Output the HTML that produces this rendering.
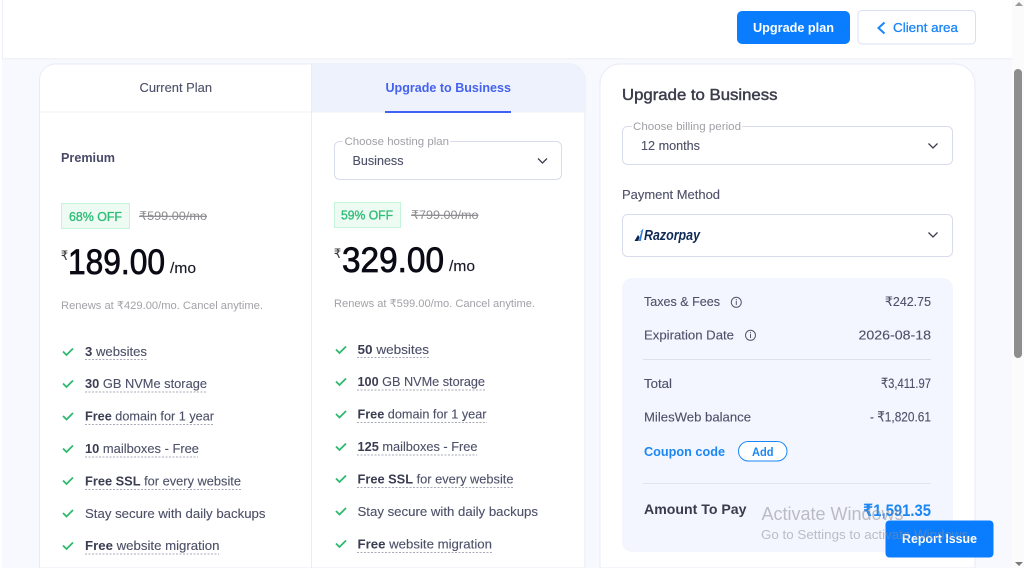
<!DOCTYPE html>
<html><head><meta charset="utf-8"><title>Upgrade to Business</title>
<style>
html,body{margin:0;padding:0;width:1024px;height:568px;overflow:hidden;background:#fff}
svg{display:block;position:absolute;left:0;top:0}
text{font-family:"Liberation Sans","DejaVu Sans",sans-serif;font-size:13px;fill:#4d5068;white-space:pre;stroke:#4d5068;stroke-width:.12}
.b{font-weight:700;stroke:none}
.d{fill:#3b3d52;font-weight:700;stroke:none}
.l{fill:#a0a0a6;font-size:11px;stroke:none}
.g{fill:#2fbd78;font-size:13px}
.s{fill:#8c8c90;font-size:12px;text-decoration:line-through;stroke:none}
.r{fill:#a2a2a8;font-size:11px;stroke:none}
.p{fill:#0a0a14;font-size:35px;stroke:#0a0a14;stroke-width:.75}
.m{fill:#1c1c2a;font-size:15px;stroke:#1c1c2a;stroke-width:.15}
.u{stroke:#a9abb8;stroke-width:1;stroke-dasharray:2 1.5;fill:none}
.c{stroke:#2fb96f;stroke-width:1.8;fill:none}
.v{stroke:#3c3e50;stroke-width:1.3;fill:none}
.i{stroke:#55586a;stroke-width:1;fill:none}
</style></head><body>
<svg width="1024" height="568" viewBox="0 0 1024 568" xmlns="http://www.w3.org/2000/svg">
<rect width="1024" height="568" fill="#fff"/>
<rect x="2" y="59" width="1010" height="509" fill="#f8f9fe"/>
<rect x="2" y="58" width="1010" height="1.5" fill="#f1f2f7"/>
<rect x="2" y="0" width="1" height="59" fill="#eeeff4"/>
<rect x="1012" y="0" width="12" height="568" fill="#fbfbfb"/>
<rect x="1014" y="69" width="8" height="289" rx="4" fill="#8e8e8e"/>
<path d="M1015 6l4-4 4 4z" fill="#9a9a9a"/><path d="M1015 562l4 4 4-4z" fill="#7a7a7a"/>

<!-- header buttons -->
<rect x="737" y="11" width="113" height="33" rx="5" fill="#0a7dff"/>
<text x="753" y="32" textLength="81" lengthAdjust="spacingAndGlyphs" class="b" style="fill:#fff">Upgrade plan</text>
<rect x="858" y="10.500" width="117.500" height="33.500" rx="4" fill="#fff" stroke="#dadff0"/>
<path d="M884.500 22.500l-6 5.500 6 5.500" fill="none" stroke="#1a85f7" stroke-width="2"/>
<text x="893" y="32" textLength="65" lengthAdjust="spacingAndGlyphs" style="fill:#1a85f7;stroke:#1a85f7;stroke-width:.3">Client area</text>

<!-- plans card -->
<path d="M39.500 568V80a16 16 0 0 1 16-16H569a16 16 0 0 1 16 16V568z" fill="#fff" stroke="#e9ebf6"/>
<path d="M312 64H569a16 16 0 0 1 16 16V112H312z" fill="#eef2fd"/>
<path d="M40 112H585" stroke="#eff0f6" stroke-width="1"/>
<path d="M311.500 64V568" stroke="#e9ebf6"/>
<rect x="385" y="111" width="126" height="2" fill="#3f62f5"/>
<text x="139.500" y="92" textLength="72.500" lengthAdjust="spacingAndGlyphs">Current Plan</text>
<text x="385.500" y="92" textLength="125.500" lengthAdjust="spacingAndGlyphs" class="b" style="fill:#4462ee">Upgrade to Business</text>

<!-- left plan -->
<text x="61" y="162" textLength="54" lengthAdjust="spacingAndGlyphs" class="d" style="fill:#484a68">Premium</text>
<rect x="61.500" y="203.500" width="68" height="25" fill="#edfbf3" stroke="#c6f4da"/>
<text x="69" y="221" textLength="53" lengthAdjust="spacingAndGlyphs" class="g" style="stroke:#2fbd78;stroke-width:.35">68% OFF</text>
<text x="139" y="220" textLength="68" lengthAdjust="spacingAndGlyphs" class="s">₹599.00/mo</text>
<text x="61" y="260" textLength="7" lengthAdjust="spacingAndGlyphs" style="font-size:13px;fill:#333;stroke:#333">₹</text>
<text x="68" y="274" textLength="97" lengthAdjust="spacingAndGlyphs" class="p">189.00</text>
<text x="170" y="273" textLength="26" lengthAdjust="spacingAndGlyphs" class="m">/mo</text>
<text x="61" y="309" textLength="202" lengthAdjust="spacingAndGlyphs" class="r">Renews at ₹429.00/mo. Cancel anytime.</text>

<path class="c" d="M63 351.500l3.500 3.500 6.500-6.500"/>
<text x="85" y="356" textLength="62" lengthAdjust="spacingAndGlyphs"><tspan class="d">3</tspan> websites</text>
<path class="u" d="M85 359.500H147"/>
<path class="c" d="M63 383.500l3.500 3.500 6.500-6.500"/>
<text x="85" y="388" textLength="122" lengthAdjust="spacingAndGlyphs"><tspan class="d">30</tspan> GB NVMe storage</text>
<path class="u" d="M85 392H206"/>
<path class="c" d="M63 416l3.500 3.500 6.500-6.500"/>
<text x="85" y="420.500" textLength="129" lengthAdjust="spacingAndGlyphs"><tspan class="d">Free</tspan> domain for 1 year</text>
<path class="u" d="M85 424.500H214"/>
<path class="c" d="M63 448.500l3.500 3.500 6.500-6.500"/>
<text x="85" y="453" textLength="114" lengthAdjust="spacingAndGlyphs"><tspan class="d">10</tspan> mailboxes - Free</text>
<path class="u" d="M85 457H198"/>
<path class="c" d="M63 480.500l3.500 3.500 6.500-6.500"/>
<text x="85" y="485.500" textLength="156" lengthAdjust="spacingAndGlyphs"><tspan class="d">Free SSL</tspan> for every website</text>
<path class="u" d="M85 489.500H241"/>
<path class="c" d="M63 513l3.500 3.500 6.500-6.500"/>
<text x="85" y="518" textLength="180.500" lengthAdjust="spacingAndGlyphs">Stay secure with daily backups</text>
<path class="c" d="M63 545.500l3.500 3.500 6.500-6.500"/>
<text x="85" y="550" textLength="134.500" lengthAdjust="spacingAndGlyphs"><tspan class="d">Free</tspan> website migration</text>
<path class="u" d="M85 554H219"/>

<!-- right plan -->
<rect x="334.500" y="141.500" width="227" height="38" rx="5" fill="#fff" stroke="#d9dced"/>
<rect x="343" y="138" width="107" height="7" fill="#fff"/>
<text x="344.500" y="145" textLength="104.500" lengthAdjust="spacingAndGlyphs" class="l">Choose hosting plan</text>
<text x="352.500" y="165" textLength="51" lengthAdjust="spacingAndGlyphs">Business</text>
<path class="v" d="M538 158.500l4.500 4.500 4.500-4.500"/>
<rect x="334.500" y="202.500" width="66" height="25" fill="#edfbf3" stroke="#c6f4da"/>
<text x="341" y="219.500" textLength="52" lengthAdjust="spacingAndGlyphs" class="g" style="stroke:#2fbd78;stroke-width:.35">59% OFF</text>
<text x="411" y="219" textLength="67.500" lengthAdjust="spacingAndGlyphs" class="s">₹799.00/mo</text>
<text x="334" y="258" textLength="7" lengthAdjust="spacingAndGlyphs" style="font-size:13px;fill:#333;stroke:#333">₹</text>
<text x="342" y="272" textLength="102" lengthAdjust="spacingAndGlyphs" class="p">329.00</text>
<text x="449" y="271" textLength="26" lengthAdjust="spacingAndGlyphs" class="m">/mo</text>
<text x="334" y="307" textLength="201" lengthAdjust="spacingAndGlyphs" class="r">Renews at ₹599.00/mo. Cancel anytime.</text>

<path class="c" d="M336 349.500l3.500 3.500 6.500-6.500"/>
<text x="357.500" y="354" textLength="71.500" lengthAdjust="spacingAndGlyphs"><tspan class="d">50</tspan> websites</text>
<path class="u" d="M357 357.500H429"/>
<path class="c" d="M336 381.500l3.500 3.500 6.500-6.500"/>
<text x="357.500" y="386" textLength="127.500" lengthAdjust="spacingAndGlyphs"><tspan class="d">100</tspan> GB NVMe storage</text>
<path class="u" d="M357 390H485"/>
<path class="c" d="M336 414l3.500 3.500 6.500-6.500"/>
<text x="357.500" y="418.500" textLength="129" lengthAdjust="spacingAndGlyphs"><tspan class="d">Free</tspan> domain for 1 year</text>
<path class="u" d="M357 422.500H487"/>
<path class="c" d="M336 446.500l3.500 3.500 6.500-6.500"/>
<text x="357.500" y="451" textLength="120" lengthAdjust="spacingAndGlyphs"><tspan class="d">125</tspan> mailboxes - Free</text>
<path class="u" d="M357 455H477"/>
<path class="c" d="M336 478.500l3.500 3.500 6.500-6.500"/>
<text x="357.500" y="483.500" textLength="156" lengthAdjust="spacingAndGlyphs"><tspan class="d">Free SSL</tspan> for every website</text>
<path class="u" d="M357 487.500H513"/>
<path class="c" d="M336 511l3.500 3.500 6.500-6.500"/>
<text x="357.500" y="516" textLength="180.500" lengthAdjust="spacingAndGlyphs">Stay secure with daily backups</text>
<path class="c" d="M336 543.500l3.500 3.500 6.500-6.500"/>
<text x="357.500" y="548.500" textLength="134.500" lengthAdjust="spacingAndGlyphs"><tspan class="d">Free</tspan> website migration</text>
<path class="u" d="M357 552.500H492"/>

<!-- checkout card -->
<path d="M600 568V84a20 20 0 0 1 20-20H955a20 20 0 0 1 20 20V568z" fill="#fff" stroke="#e9ebf6"/>
<text x="622" y="100" textLength="155.500" lengthAdjust="spacingAndGlyphs" style="font-size:16px;fill:#3c3d4c;stroke:#3c3d4c;stroke-width:.45">Upgrade to Business</text>
<rect x="622.500" y="126.500" width="330" height="38" rx="5" fill="#fff" stroke="#d9dced"/>
<rect x="632" y="123" width="110" height="7" fill="#fff"/>
<text x="633" y="130" textLength="108" lengthAdjust="spacingAndGlyphs" class="l">Choose billing period</text>
<text x="641" y="150" textLength="59" lengthAdjust="spacingAndGlyphs">12 months</text>
<path class="v" d="M928.500 143.500l4.500 4.500 4.500-4.500"/>
<text x="622" y="199" textLength="98" lengthAdjust="spacingAndGlyphs">Payment Method</text>
<rect x="622.500" y="214.500" width="330" height="42" rx="5" fill="#fff" stroke="#d9dced"/>
<path d="M634.500 241l3.500-6 1.500 2-1.200 4z" fill="#0c2451"/>
<path d="M638.800 241l2.600-10-3 2.500 5-5-2.600 12.500z" fill="#2f7fd8"/>
<text x="644" y="240" textLength="56" lengthAdjust="spacingAndGlyphs" style="font-size:14.500px;font-weight:700;font-style:italic;fill:#0f2a57;stroke:none">Razorpay</text>
<path class="v" d="M928.500 232.500l4.500 4.500 4.500-4.500"/>

<!-- summary -->
<rect x="622" y="278" width="331" height="274" rx="10" fill="#f3f6fe"/>
<text x="644" y="306" textLength="76" lengthAdjust="spacingAndGlyphs">Taxes &amp; Fees</text>
<circle class="i" cx="736.300" cy="302.300" r="5"/><path class="i" d="M736.300 301v4M736.300 299v1.300"/>
<text x="885" y="306" textLength="46" lengthAdjust="spacingAndGlyphs">₹242.75</text>
<text x="644" y="339.500" textLength="90" lengthAdjust="spacingAndGlyphs">Expiration Date</text>
<circle class="i" cx="750.500" cy="335.300" r="5"/><path class="i" d="M750.500 334v4M750.500 332v1.300"/>
<text x="858.500" y="339.500" textLength="72.500" lengthAdjust="spacingAndGlyphs">2026-08-18</text>
<rect x="643" y="359" width="288" height="1" fill="#dfe1ea"/>
<text x="644" y="388" textLength="28" lengthAdjust="spacingAndGlyphs">Total</text>
<text x="881" y="388" textLength="50" lengthAdjust="spacingAndGlyphs" style="font-size:14px">₹3,411.97</text>
<text x="644" y="421.500" textLength="107" lengthAdjust="spacingAndGlyphs">MilesWeb balance</text>
<text x="870" y="421.500" textLength="61" lengthAdjust="spacingAndGlyphs" style="font-size:14px">- ₹1,820.61</text>
<text x="644" y="456" textLength="81" lengthAdjust="spacingAndGlyphs" class="b" style="fill:#1a87f5">Coupon code</text>
<rect x="738.500" y="441.500" width="48.500" height="19.500" rx="9.750" fill="#fff" stroke="#1a87f5"/>
<text x="752" y="456" textLength="21.500" lengthAdjust="spacingAndGlyphs" class="b" style="fill:#1a87f5;font-size:12px">Add</text>
<rect x="643" y="483" width="288" height="1" fill="#e3e5ee"/>
<text x="644" y="514" textLength="102.500" lengthAdjust="spacingAndGlyphs" class="b" style="font-size:14px;fill:#3a3b4c">Amount To Pay</text>
<text x="863" y="516" textLength="68" lengthAdjust="spacingAndGlyphs" class="b" style="font-size:17px;fill:#1a87f5">₹1,591.35</text>

<!-- report button -->
<rect x="885.500" y="520.500" width="108" height="37" rx="4" fill="#0a7dff"/>
<text x="902" y="543" textLength="75" lengthAdjust="spacingAndGlyphs" class="b" style="fill:#fff">Report Issue</text>

<!-- watermark -->
<text x="761.500" y="520" textLength="142" lengthAdjust="spacingAndGlyphs" style="font-size:18px;fill:#8d8d92;fill-opacity:.55;stroke:none">Activate Windows</text>
<text x="761" y="539" textLength="211" lengthAdjust="spacingAndGlyphs" style="font-size:12.500px;fill:#8d8d92;fill-opacity:.55;stroke:none">Go to Settings to activate Windows.</text>
</svg>
</body></html>
